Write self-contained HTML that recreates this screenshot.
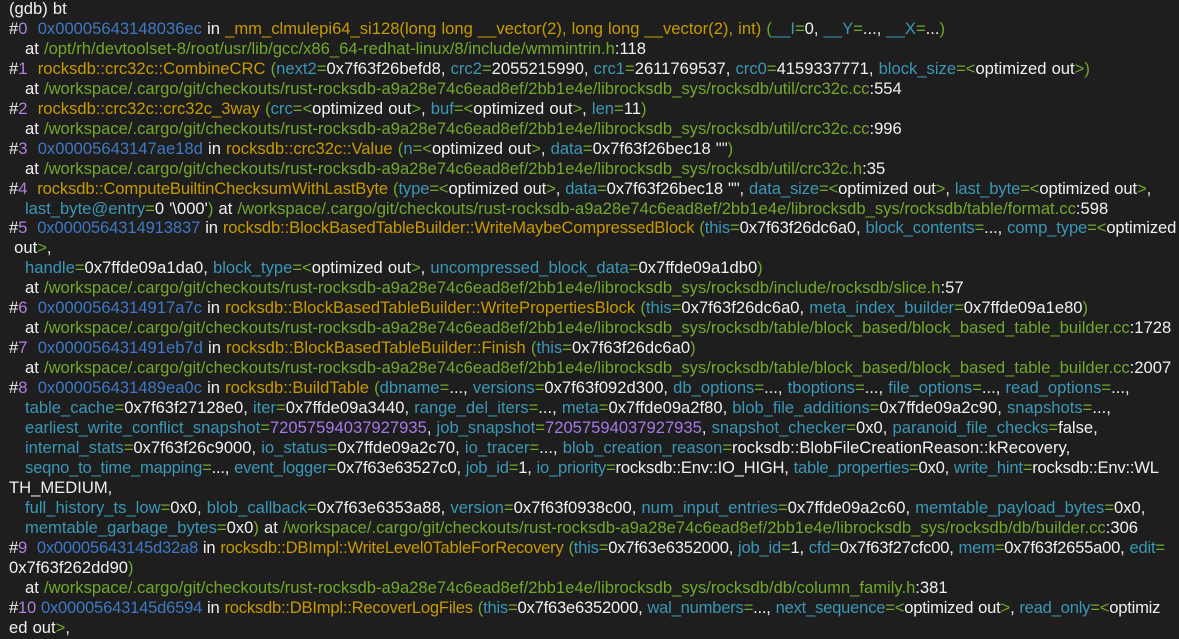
<!DOCTYPE html>
<html><head><meta charset="utf-8"><style>
html,body{margin:0;padding:0;background:#1e1e1e;width:1179px;height:639px;overflow:hidden}
#t{position:absolute;left:9px;top:-1px;font-family:"Liberation Sans","Noto Sans CJK SC",sans-serif;font-size:16.6px;word-spacing:0.5px;line-height:19.95px;color:#f0f0f0;white-space:pre}
.p{color:#b080e0}.b{color:#3f78c4}.y{color:#c79a00}.g{color:#72a82c}.t{color:#3b97b6}.m{color:#a878e8}
.i{padding-left:16px}
.c{letter-spacing:-0.22px}.c1{letter-spacing:-0.12px}
</style></head><body><div id="t"><div>(gdb) bt</div><div>#<span class="p">0</span>  <span class="b">0x00005643148036ec</span> in <span class="y">_mm_clmulepi64_si128(long long __vector(2), long long __vector(2), int)</span> <span class="g">(</span><span class="t">__I</span><span class="g">=</span>0, <span class="t">__Y</span><span class="g">=</span>..., <span class="t">__X</span><span class="g">=</span>...<span class="g">)</span></div><div class="i">at <span class="g">/opt/rh/devtoolset-8/root/usr/lib/gcc/x86_64-redhat-linux/8/include/wmmintrin.h</span>:118</div><div>#<span class="p">1</span>  <span class="y">rocksdb::crc32c::CombineCRC</span> <span class="g">(</span><span class="t">next2</span><span class="g">=</span>0x7f63f26befd8, <span class="t">crc2</span><span class="g">=</span>2055215990, <span class="t">crc1</span><span class="g">=</span>2611769537, <span class="t">crc0</span><span class="g">=</span>4159337771, <span class="t">block_size</span><span class="g">=&lt;</span>optimized out<span class="g">&gt;)</span></div><div class="i">at <span class="g">/workspace/.cargo/git/checkouts/rust-rocksdb-a9a28e74c6ead8ef/2bb1e4e/librocksdb_sys/rocksdb/util/crc32c.cc</span>:554</div><div>#<span class="p">2</span>  <span class="y">rocksdb::crc32c::crc32c_3way</span> <span class="g">(</span><span class="t">crc</span><span class="g">=&lt;</span>optimized out<span class="g">&gt;</span>, <span class="t">buf</span><span class="g">=&lt;</span>optimized out<span class="g">&gt;</span>, <span class="t">len</span><span class="g">=</span>11<span class="g">)</span></div><div class="i">at <span class="g">/workspace/.cargo/git/checkouts/rust-rocksdb-a9a28e74c6ead8ef/2bb1e4e/librocksdb_sys/rocksdb/util/crc32c.cc</span>:996</div><div>#<span class="p">3</span>  <span class="b">0x00005643147ae18d</span> in <span class="y">rocksdb::crc32c::Value</span> <span class="g">(</span><span class="t">n</span><span class="g">=&lt;</span>optimized out<span class="g">&gt;</span>, <span class="t">data</span><span class="g">=</span>0x7f63f26bec18 ""<span class="g">)</span></div><div class="i">at <span class="g">/workspace/.cargo/git/checkouts/rust-rocksdb-a9a28e74c6ead8ef/2bb1e4e/librocksdb_sys/rocksdb/util/crc32c.h</span>:35</div><div class="c1">#<span class="p">4</span>  <span class="y">rocksdb::ComputeBuiltinChecksumWithLastByte</span> <span class="g">(</span><span class="t">type</span><span class="g">=&lt;</span>optimized out<span class="g">&gt;</span>, <span class="t">data</span><span class="g">=</span>0x7f63f26bec18 "", <span class="t">data_size</span><span class="g">=&lt;</span>optimized out<span class="g">&gt;</span>, <span class="t">last_byte</span><span class="g">=&lt;</span>optimized out<span class="g">&gt;</span>,</div><div class="i"><span class="t">last_byte@entry</span><span class="g">=</span>0 '\000'<span class="g">)</span> at <span class="g">/workspace/.cargo/git/checkouts/rust-rocksdb-a9a28e74c6ead8ef/2bb1e4e/librocksdb_sys/rocksdb/table/format.cc</span>:598</div><div class="c1">#<span class="p">5</span>  <span class="b">0x0000564314913837</span> in <span class="y">rocksdb::BlockBasedTableBuilder::WriteMaybeCompressedBlock</span> <span class="g">(</span><span class="t">this</span><span class="g">=</span>0x7f63f26dc6a0, <span class="t">block_contents</span><span class="g">=</span>..., <span class="t">comp_type</span><span class="g">=&lt;</span>optimized</div><div> out<span class="g">&gt;</span>,</div><div class="i"><span class="t">handle</span><span class="g">=</span>0x7ffde09a1da0, <span class="t">block_type</span><span class="g">=&lt;</span>optimized out<span class="g">&gt;</span>, <span class="t">uncompressed_block_data</span><span class="g">=</span>0x7ffde09a1db0<span class="g">)</span></div><div class="i">at <span class="g">/workspace/.cargo/git/checkouts/rust-rocksdb-a9a28e74c6ead8ef/2bb1e4e/librocksdb_sys/rocksdb/include/rocksdb/slice.h</span>:57</div><div>#<span class="p">6</span>  <span class="b">0x0000564314917a7c</span> in <span class="y">rocksdb::BlockBasedTableBuilder::WritePropertiesBlock</span> <span class="g">(</span><span class="t">this</span><span class="g">=</span>0x7f63f26dc6a0, <span class="t">meta_index_builder</span><span class="g">=</span>0x7ffde09a1e80<span class="g">)</span></div><div class="i">at <span class="g">/workspace/.cargo/git/checkouts/rust-rocksdb-a9a28e74c6ead8ef/2bb1e4e/librocksdb_sys/rocksdb/table/block_based/block_based_table_builder.cc</span>:1728</div><div>#<span class="p">7</span>  <span class="b">0x000056431491eb7d</span> in <span class="y">rocksdb::BlockBasedTableBuilder::Finish</span> <span class="g">(</span><span class="t">this</span><span class="g">=</span>0x7f63f26dc6a0<span class="g">)</span></div><div class="i">at <span class="g">/workspace/.cargo/git/checkouts/rust-rocksdb-a9a28e74c6ead8ef/2bb1e4e/librocksdb_sys/rocksdb/table/block_based/block_based_table_builder.cc</span>:2007</div><div>#<span class="p">8</span>  <span class="b">0x000056431489ea0c</span> in <span class="y">rocksdb::BuildTable</span> <span class="g">(</span><span class="t">dbname</span><span class="g">=</span>..., <span class="t">versions</span><span class="g">=</span>0x7f63f092d300, <span class="t">db_options</span><span class="g">=</span>..., <span class="t">tboptions</span><span class="g">=</span>..., <span class="t">file_options</span><span class="g">=</span>..., <span class="t">read_options</span><span class="g">=</span>...,</div><div class="i"><span class="t">table_cache</span><span class="g">=</span>0x7f63f27128e0, <span class="t">iter</span><span class="g">=</span>0x7ffde09a3440, <span class="t">range_del_iters</span><span class="g">=</span>..., <span class="t">meta</span><span class="g">=</span>0x7ffde09a2f80, <span class="t">blob_file_additions</span><span class="g">=</span>0x7ffde09a2c90, <span class="t">snapshots</span><span class="g">=</span>...,</div><div class="i"><span class="t">earliest_write_conflict_snapshot</span><span class="g">=</span><span class="m">72057594037927935</span>, <span class="t">job_snapshot</span><span class="g">=</span><span class="m">72057594037927935</span>, <span class="t">snapshot_checker</span><span class="g">=</span>0x0, <span class="t">paranoid_file_checks</span><span class="g">=</span>false,</div><div class="i"><span class="t">internal_stats</span><span class="g">=</span>0x7f63f26c9000, <span class="t">io_status</span><span class="g">=</span>0x7ffde09a2c70, <span class="t">io_tracer</span><span class="g">=</span>..., <span class="t">blob_creation_reason</span><span class="g">=</span>rocksdb::BlobFileCreationReason::kRecovery,</div><div class="i c"><span class="t">seqno_to_time_mapping</span><span class="g">=</span>..., <span class="t">event_logger</span><span class="g">=</span>0x7f63e63527c0, <span class="t">job_id</span><span class="g">=</span>1, <span class="t">io_priority</span><span class="g">=</span>rocksdb::Env::IO_HIGH, <span class="t">table_properties</span><span class="g">=</span>0x0, <span class="t">write_hint</span><span class="g">=</span>rocksdb::Env::WL</div><div>TH_MEDIUM,</div><div class="i"><span class="t">full_history_ts_low</span><span class="g">=</span>0x0, <span class="t">blob_callback</span><span class="g">=</span>0x7f63e6353a88, <span class="t">version</span><span class="g">=</span>0x7f63f0938c00, <span class="t">num_input_entries</span><span class="g">=</span>0x7ffde09a2c60, <span class="t">memtable_payload_bytes</span><span class="g">=</span>0x0,</div><div class="i"><span class="t">memtable_garbage_bytes</span><span class="g">=</span>0x0<span class="g">)</span> at <span class="g">/workspace/.cargo/git/checkouts/rust-rocksdb-a9a28e74c6ead8ef/2bb1e4e/librocksdb_sys/rocksdb/db/builder.cc</span>:306</div><div class="c">#<span class="p">9</span>  <span class="b">0x00005643145d32a8</span> in <span class="y">rocksdb::DBImpl::WriteLevel0TableForRecovery</span> <span class="g">(</span><span class="t">this</span><span class="g">=</span>0x7f63e6352000, <span class="t">job_id</span><span class="g">=</span>1, <span class="t">cfd</span><span class="g">=</span>0x7f63f27cfc00, <span class="t">mem</span><span class="g">=</span>0x7f63f2655a00, <span class="t">edit</span><span class="g">=</span></div><div>0x7f63f262dd90<span class="g">)</span></div><div class="i">at <span class="g">/workspace/.cargo/git/checkouts/rust-rocksdb-a9a28e74c6ead8ef/2bb1e4e/librocksdb_sys/rocksdb/db/column_family.h</span>:381</div><div class="c">#<span class="p">10</span> <span class="b">0x00005643145d6594</span> in <span class="y">rocksdb::DBImpl::RecoverLogFiles</span> <span class="g">(</span><span class="t">this</span><span class="g">=</span>0x7f63e6352000, <span class="t">wal_numbers</span><span class="g">=</span>..., <span class="t">next_sequence</span><span class="g">=&lt;</span>optimized out<span class="g">&gt;</span>, <span class="t">read_only</span><span class="g">=&lt;</span>optimiz</div><div>ed out<span class="g">&gt;</span>,</div></div></body></html>
